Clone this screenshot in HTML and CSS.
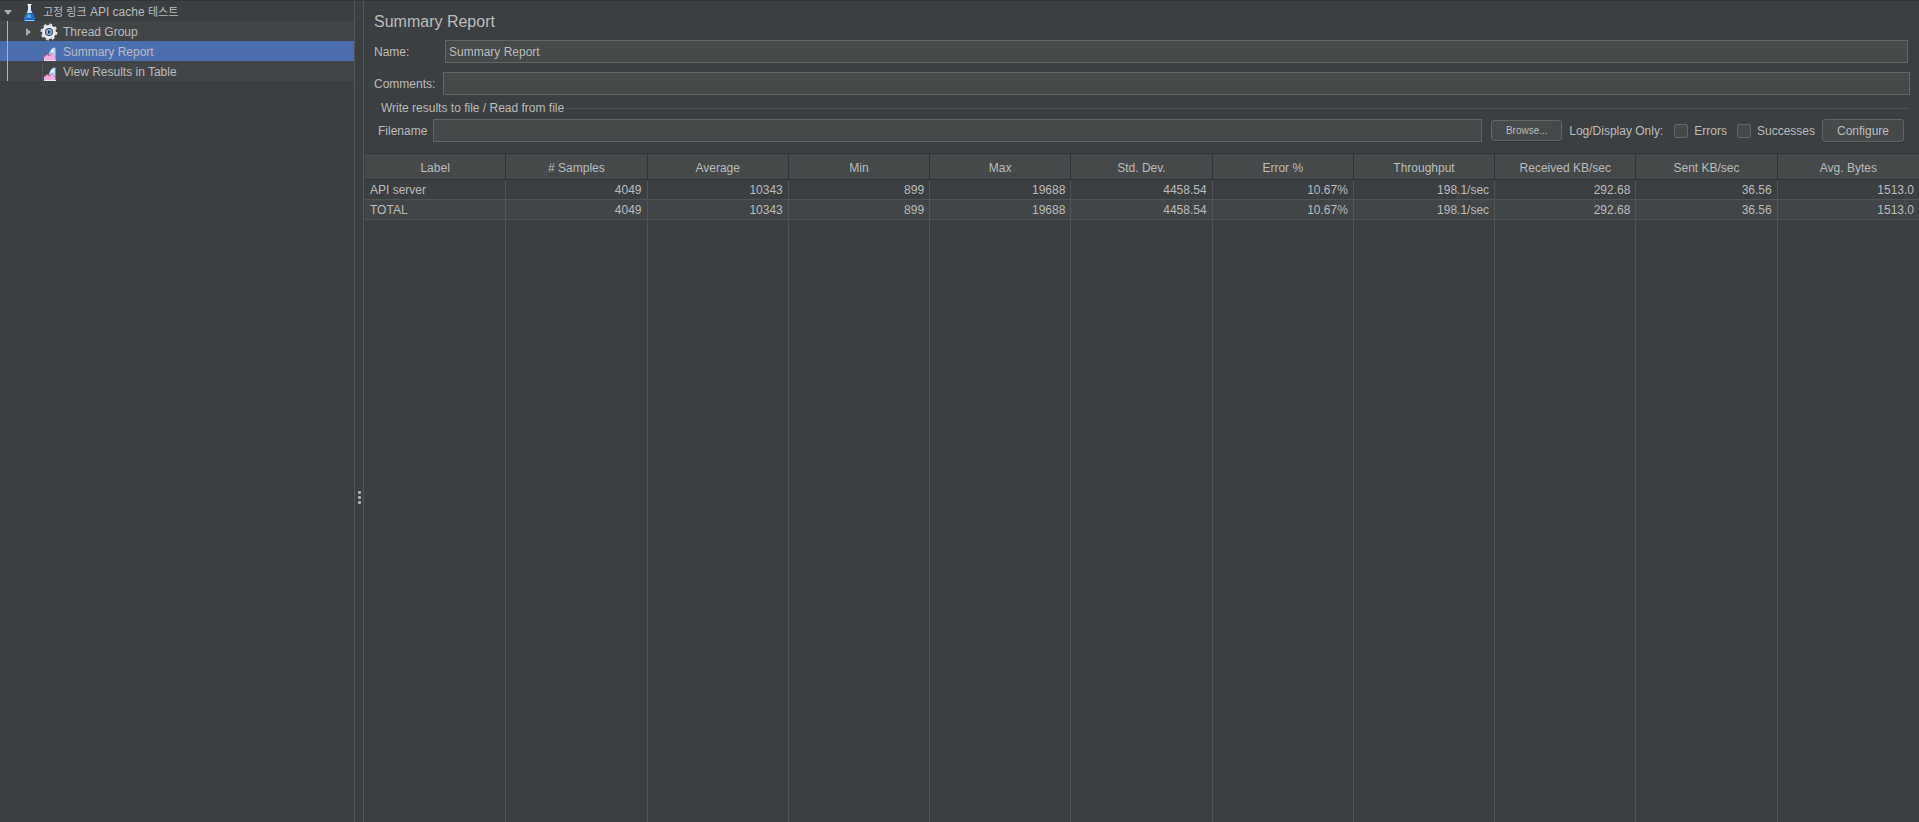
FILE: index.html
```html
<!DOCTYPE html>
<html lang="ko">
<head>
  <meta charset="UTF-8">
  <title>Summary Report</title>
  <link rel="stylesheet" href="styles.css">
</head>
<body>
  <svg class="defs" aria-hidden="true">
    <symbol id="chart" viewBox="0 0 16 17">
      <path d="M1.500 0v15M1 15.500h14" fill="none" stroke="#6b6d75" stroke-dasharray="1 1"/>
      <path d="M7.500 10L9 6l2.500-3 3-.5V12l-3-3-2 2z" fill="#a9d8f5"/>
      <path d="M9.500 8l1-3 2.500-1.500V7z" fill="#e4f5ff"/>
      <path d="M3 15v-3l3-2.500L8.500 11l3-3L13 11l1.500 1v3z" fill="#f5b0e3"/>
      <path d="M2.500 12.500l3.500-3L8.500 11l3-3" fill="none" stroke="#d6588e"/>
      <path d="M3 15.500h12" stroke="#e8dbe8"/>
    </symbol>
  </svg>

  <nav class="tree">
    <ul>
      <li class="row root">
        <svg class="arrow" viewBox="0 0 8 8"><path d="M0 2h8L4 7z" fill="#adadad"/></svg>
        <svg class="icon" viewBox="0 0 18 20">
          <path d="M8 3h3v5l4 9q.5 2-1 2H5q-1.500 0-1-2l4-9z" fill="#c6dcee"/>
          <path d="M6.500 11h6l2.500 6q.5 2-1 2H5q-1.500 0-1-2z" fill="#1768c8"/>
          <path d="M7.500 12h3l1 4H6z" fill="#4b9cea"/>
          <path d="M7.500 2.500h4M9 3v7" stroke="#f5faff"/>
          <path d="M5 18.500h9" stroke="#9cc9ee"/>
        </svg>
        <span><span class="hangul">고정 링크</span> API cache <span class="hangul">테스트</span></span>
      </li>
      <li class="row odd">
        <svg class="arrow" viewBox="0 0 8 8"><path d="M2 0v8l5-4z" fill="#adadad"/></svg>
        <svg class="icon" viewBox="0 0 18 20">
          <circle cx="9" cy="10" r="7.500" fill="none" stroke="#d9dcde" stroke-width="2" stroke-dasharray="3 2.890"/>
          <circle cx="9" cy="10" r="5.500" fill="#5d7690" stroke="#e8eaeb" stroke-width="3"/>
          <circle cx="9" cy="10" r="3.500" fill="#9cc0e2" stroke="#2e4866"/>
          <path d="M8 8l3 2-3 2z" fill="#17375f"/>
        </svg>
        <span>Thread Group</span>
      </li>
      <li class="row leaf selected">
        <svg class="icon"><use href="#chart" x="1" y="3" width="16" height="17"/></svg>
        <span>Summary Report</span>
      </li>
      <li class="row leaf odd">
        <svg class="icon"><use href="#chart" x="1" y="3" width="16" height="17"/></svg>
        <span>View Results in Table</span>
      </li>
    </ul>
  </nav>

  <div class="divider"><i></i><i></i><i></i></div>

  <main>
    <form class="settings">
      <h1>Summary Report</h1>
      <div class="field name">
        <label for="name">Name:</label>
        <input type="text" id="name" value="Summary Report">
      </div>
      <div class="field comments">
        <label for="comments">Comments:</label>
        <input type="text" id="comments">
      </div>
      <fieldset>
        <legend>Write results to file / Read from file</legend>
        <div class="file-row">
          <label for="filename">Filename</label>
          <input type="text" id="filename">
          <button type="button" class="browse">Browse...</button>
          <span class="log">Log/Display Only:</span>
          <label class="check"><input type="checkbox"> Errors</label>
          <label class="check"><input type="checkbox"> Successes</label>
          <button type="button" class="configure">Configure</button>
        </div>
      </fieldset>
    </form>

    <table>
      <thead>
        <tr>
          <th>Label</th>
          <th># Samples</th>
          <th>Average</th>
          <th>Min</th>
          <th>Max</th>
          <th>Std. Dev.</th>
          <th>Error %</th>
          <th>Throughput</th>
          <th>Received KB/sec</th>
          <th>Sent KB/sec</th>
          <th>Avg. Bytes</th>
        </tr>
      </thead>
      <tbody>
        <tr>
          <td>API server</td>
          <td>4049</td>
          <td>10343</td>
          <td>899</td>
          <td>19688</td>
          <td>4458.54</td>
          <td>10.67%</td>
          <td>198.1/sec</td>
          <td>292.68</td>
          <td>36.56</td>
          <td>1513.0</td>
        </tr>
        <tr class="total">
          <td>TOTAL</td>
          <td>4049</td>
          <td>10343</td>
          <td>899</td>
          <td>19688</td>
          <td>4458.54</td>
          <td>10.67%</td>
          <td>198.1/sec</td>
          <td>292.68</td>
          <td>36.56</td>
          <td>1513.0</td>
        </tr>
        <tr class="empty">
          <td></td><td></td><td></td><td></td><td></td><td></td><td></td><td></td><td></td><td></td><td></td>
        </tr>
      </tbody>
    </table>
  </main>
</body>
</html>
```

FILE: styles.css
```css
* {
  box-sizing: border-box;
}

body {
  display: flex;
  height: 100vh;
  margin: 0;
  border-top: 1px solid #323537;
  background: #3c3f41;
  color: #bbbbbb;
  font-family: "Liberation Sans", "Noto Sans CJK KR", sans-serif;
  font-size: 12px;
  line-height: 14px;
}

.defs {
  position: absolute;
  width: 0;
  height: 0;
}

/* test plan tree */
.tree {
  flex: 0 0 355px;
  border-right: 1px solid #555555;
}

.tree ul {
  position: relative;
  margin: 0;
  padding: 0;
  list-style: none;
}

.tree ul::after {
  content: "";
  position: absolute;
  top: 20px;
  bottom: 0;
  left: 7px;
  width: 1px;
  background: #7fc0f5;
}

.row {
  display: flex;
  align-items: center;
  height: 20px;
  padding: 2px 0 0 24px;
}

.root {
  padding-left: 4px;
}

.leaf {
  padding-left: 40px;
}

.odd {
  background: #414547;
}

.selected {
  background: #4b6eaf;
}

.arrow {
  width: 8px;
  height: 8px;
  margin-right: 8px;
}

.icon {
  width: 18px;
  height: 20px;
  margin-right: 5px;
}

.hangul {
  font-size: 11px;
}

.divider {
  display: flex;
  flex: 0 0 9px;
  flex-direction: column;
  align-items: center;
  justify-content: center;
  gap: 2px;
  padding-top: 172px;
  border-right: 1px solid #555555;
}

.divider i {
  width: 3px;
  height: 3px;
  border-radius: 1px;
  background: #afb1b3;
}

main {
  display: flex;
  flex: 1;
  flex-direction: column;
  min-width: 0;
  padding-left: 1px;
}

.settings {
  padding: 12px 9px 11px;
}

h1 {
  margin: 0 0 9px;
  font-size: 16px;
  font-weight: normal;
  line-height: 18px;
}

.field {
  display: flex;
  align-items: center;
}

.field label {
  flex: 0 0 69px;
}

.name {
  margin: 0 2px 9px 0;
}

.name label {
  flex-basis: 71px;
}

input[type="text"] {
  flex: 1;
  min-width: 0;
  height: 23px;
  padding: 0 3px;
  border: 1px solid #646464;
  background: #45494a;
  color: #bbbbbb;
  font: inherit;
}

fieldset {
  margin: 6px 2px 0;
  padding: 4px 4px 0 2px;
  border: 0;
  border-top: 1px solid #515151;
}

legend {
  margin-left: 1px;
  padding: 0 2px;
}

.file-row {
  display: flex;
  align-items: center;
}

.file-row > label:first-child {
  margin-right: 6px;
}

button {
  border: 1px solid #646464;
  border-radius: 3px;
  background: #45494a;
  box-shadow: 0 1px 0 #333638;
  color: #bbbbbb;
  font-family: inherit;
}

.browse {
  width: 71px;
  height: 21px;
  margin-left: 9px;
  padding: 0;
  font-size: 10px;
}

.configure {
  width: 82px;
  height: 23px;
  margin-left: 7px;
  padding: 0;
  font-size: 12px;
}

.log {
  margin: 0 1px 0 7px;
}

.check {
  display: flex;
  align-items: center;
  gap: 6px;
  margin-left: 10px;
}

.check input {
  width: 14px;
  height: 14px;
  margin: 0;
  border: 1px solid #646464;
  border-radius: 2px;
  background: #45494a;
  appearance: none;
}

/* results */
table {
  flex: 1;
  width: 100%;
  border-spacing: 0;
  table-layout: fixed;
}

th,
td {
  padding: 0 5px;
  border-right: 1px solid #515456;
  border-bottom: 1px solid #515456;
}

th {
  height: 27px;
  padding-top: 2px;
  border-color: #323537;
  border-top: 1px solid #323537;
  background: #45494a;
  font-weight: normal;
}

td {
  height: 20px;
  text-align: right;
}

td:first-child {
  text-align: left;
}

th:last-child,
td:last-child {
  border-right: 0;
}

.total {
  background: #414547;
}

.empty td {
  height: auto;
  border-bottom: 0;
}
```
